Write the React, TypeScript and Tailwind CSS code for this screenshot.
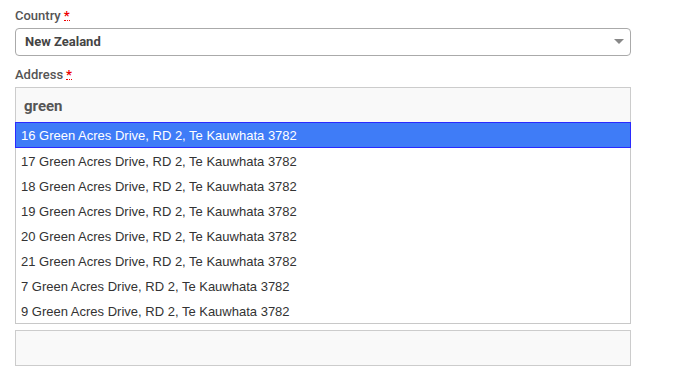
import React from "react";

const items = [
  "16 Green Acres Drive, RD 2, Te Kauwhata 3782",
  "17 Green Acres Drive, RD 2, Te Kauwhata 3782",
  "18 Green Acres Drive, RD 2, Te Kauwhata 3782",
  "19 Green Acres Drive, RD 2, Te Kauwhata 3782",
  "20 Green Acres Drive, RD 2, Te Kauwhata 3782",
  "21 Green Acres Drive, RD 2, Te Kauwhata 3782",
  "7 Green Acres Drive, RD 2, Te Kauwhata 3782",
  "9 Green Acres Drive, RD 2, Te Kauwhata 3782",
];

function Req() {
  return (
    <abbr
      title="required"
      className="ml-[3px] text-[#e00] no-underline border-b border-dotted border-[#e00] leading-[10px] inline-block h-[10px] font-bold"
    >
      *
    </abbr>
  );
}

export default function App() {
  return (
    <div className="w-[684px] h-[379px] bg-white px-[15px] pt-[7px]" style={{ fontFamily: "Roboto, 'Liberation Sans', sans-serif" }}>
      <div className="w-[616px]">
        <label className="flex items-center h-[17px] text-[13px] font-medium text-[#555]">
          Country
          <Req />
        </label>
        <div className="mt-[4px] h-[28px] border border-[#aaa] rounded-[4px] flex items-center justify-between pl-[9px] pr-[6px]">
          <span className="text-[13px] font-bold text-[#444]">New Zealand</span>
          <svg width="10" height="6" viewBox="0 0 10 6"><path d="M0 0 L10 0 L5 5 Z" fill="#888" /></svg>
        </div>
        <label className="mt-[10px] flex items-center h-[17px] text-[13px] font-medium text-[#555]">
          Address
          <Req />
        </label>
        <div className="mt-[4px] h-[35px] border border-[#ccc] border-b-0 bg-[#f9f9f9] flex items-center pl-[8px] pt-[2px]">
          <span className="text-[15px] font-bold text-[#555]">green</span>
        </div>
        <div className="border border-[#c8c8c8] border-t-0 bg-white" style={{ fontFamily: "'Liberation Sans', Arial, sans-serif" }}>
          {items.map((it, i) => (
            <div
              key={i}
              className={
                i === 0
                  ? "h-[26px] flex items-center pl-[5px] pt-[1px] text-[13px] bg-[#3f7cf7] text-white border border-[#2a2aff] -mx-px"
                  : "h-[25px] flex items-center pl-[5px] pt-[2px] text-[13px] text-[#333]"
              }
            >
              {it}
            </div>
          ))}
        </div>
        <div className="mt-[6px] h-[36px] border border-[#ccc] bg-[#f9f9f9]" />
      </div>
    </div>
  );
}
